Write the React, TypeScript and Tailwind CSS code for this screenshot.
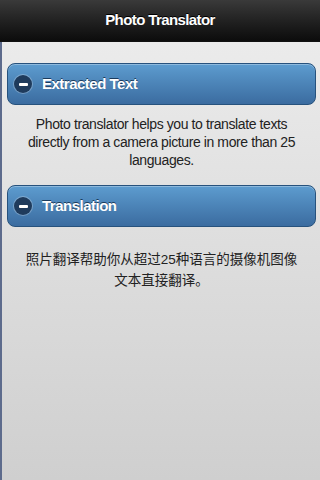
const font = { fontFamily: '"Liberation Sans", Arial, "Noto Sans CJK SC", sans-serif' };

function MinusIcon() {
  return (
    <span className="flex h-[18px] w-[18px] shrink-0 items-center justify-center rounded-full bg-[#1f3b5c] shadow-[0_0_0_1px_rgba(255,255,255,0.25)]">
      <span className="h-[3px] w-[9px] rounded-[1px] bg-white" />
    </span>
  );
}

function SectionBar({ title }: { title: string }) {
  return (
    <div className="flex h-[42px] items-center gap-[10px] rounded-[8px] border border-[#27527d] bg-gradient-to-b from-[#5d9ccf] to-[#3b6ca0] pl-[6px] shadow-[inset_0_1px_0_rgba(255,255,255,0.3)]">
      <MinusIcon />
      <span className="text-[15px] font-bold tracking-[-0.5px] text-white [text-shadow:0_-1px_0_#1b3b5c]">{title}</span>
    </div>
  );
}

export default function App() {
  return (
    <div className="flex h-[480px] w-[320px] flex-col overflow-hidden" style={font}>
      <header className="flex h-[42px] shrink-0 items-center justify-center border-b border-[#111] bg-gradient-to-b from-[#3a3a3a] to-[#0c0c0c]">
        <h1 className="text-[15px] font-bold tracking-[-0.6px] text-white [text-shadow:0_-1px_0_#000]">Photo Translator</h1>
      </header>
      <main className="flex flex-1 border-l-2 border-[#5d6b8c] bg-gradient-to-b from-[#ebebeb] to-[#cfcfcf]">
        <div className="flex flex-1 flex-col pl-[5px] pr-[4px] pt-[21px]">
          <SectionBar title="Extracted Text" />
          <p className="px-[12px] pb-[16px] pt-[10px] text-center text-[14px] leading-[18px] tracking-[-0.4px] text-[#222]">
            Photo translator helps you to translate texts directly from a camera picture in more than 25 languages.
          </p>
          <SectionBar title="Translation" />
          <p className="px-[16px] pt-[22px] text-center text-[13.5px] leading-[21px] text-[#222]">
            照片翻译帮助你从超过25种语言的摄像机图像文本直接翻译。
          </p>
        </div>
      </main>
    </div>
  );
}
